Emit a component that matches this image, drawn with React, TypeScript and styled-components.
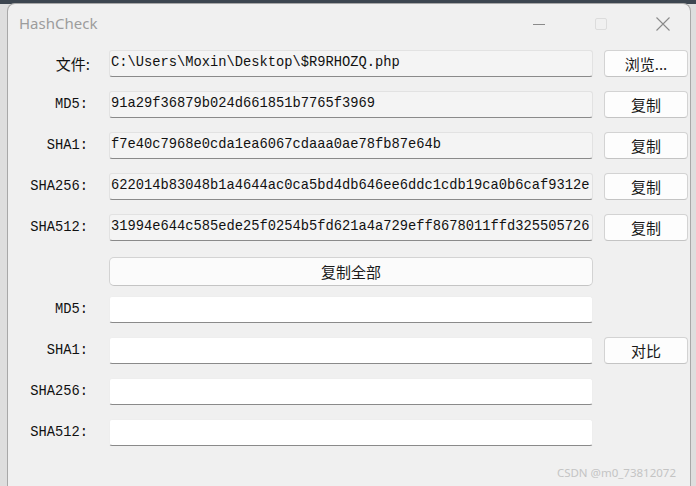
import React from "react";
import styled, { createGlobalStyle } from "styled-components";

const Global = createGlobalStyle`
  html, body { margin: 0; padding: 0; }
  body {
    width: 696px;
    height: 486px;
    overflow: hidden;
    background: linear-gradient(#3d4650 0 4px, #dedede 4px);
  }
  #root { height: 100%; }
`;

const Desktop = styled.div`
  height: 100%;
  padding: 3px 5px 0 7px;
  box-sizing: border-box;
  display: flex;
`;

const Window = styled.div`
  flex: 1;
  background: #f0f0f0;
  border: 1px solid #a8a8a8;
  border-bottom: none;
  border-radius: 8px 8px 0 0;
  display: flex;
  flex-direction: column;
  position: relative;
  overflow: hidden;
`;

const TitleBar = styled.div`
  height: 39px;
  display: flex;
  align-items: center;
  padding-left: 11px;
  box-sizing: border-box;
`;

const Title = styled.div`
  flex: 1;
  font-family: "Noto Sans", "Open Sans", sans-serif;
  font-size: 15px;
  color: #9c9c9c;
  padding-bottom: 2px;
`;

const Controls = styled.div`
  display: flex;
  align-items: center;
  height: 100%;
  margin-right: -4px;
`;

const Ctl = styled.div`
  width: 62px;
  height: 100%;
  display: flex;
  align-items: center;
  justify-content: center;
`;

const Content = styled.div`
  display: flex;
  flex-direction: column;
  padding-top: 7px;
`;

const Row = styled.div<{ $mt?: number }>`
  display: grid;
  grid-template-columns: 90px 484px 84px;
  column-gap: 11px;
  align-items: center;
  height: 27px;
  margin-top: ${(p) => p.$mt ?? 0}px;
`;

const Label = styled.div<{ $cjk?: boolean }>`
  text-align: right;
  padding-right: ${(p) => (p.$cjk ? 8 : 10)}px;
  font-family: ${(p) =>
    p.$cjk
      ? `"Noto Sans CJK SC", sans-serif`
      : `"Liberation Mono", "Noto Sans CJK SC", monospace`};
  font-size: ${(p) => (p.$cjk ? "15px" : "13.75px")};
  color: #111;
  white-space: nowrap;
`;

const Field = styled.div<{ $white?: boolean }>`
  height: 27px;
  box-sizing: border-box;
  background: ${(p) => (p.$white ? "#ffffff" : "#f4f4f4")};
  border: 1px solid ${(p) => (p.$white ? "#eeeeee" : "#e2e2e2")};
  border-bottom: 1px solid #8a8a8a;
  border-radius: 3px;
  padding: 0 1px;
  font-family: "Liberation Mono", "Noto Sans CJK SC", monospace;
  font-size: 13.75px;
  line-height: 23px;
  color: #111;
  white-space: nowrap;
  overflow: hidden;
`;

const Button = styled.button<{ $h?: number }>`
  height: ${(p) => p.$h ?? 27}px;
  box-sizing: border-box;
  background: #fdfdfd;
  border: 1px solid #d3d3d3;
  border-bottom-color: #c4c4c4;
  border-radius: 4px;
  font-family: "Noto Sans CJK SC", sans-serif;
  font-size: 15px;
  color: #1a1a1a;
  padding: 0;
  line-height: 1;
  display: flex;
  align-items: center;
  justify-content: center;
`;

const WideButton = styled(Button)`
  grid-column: 2;
  height: 29px;
  background: #fbfbfb;
  border-radius: 5px;
`;

const Watermark = styled.div`
  position: absolute;
  right: 14px;
  bottom: 6px;
  font-family: "Noto Sans", sans-serif;
  font-size: 11.5px;
  color: #c4c4c4;
`;

const top = [
  { label: "MD5:", value: "91a29f36879b024d661851b7765f3969" },
  { label: "SHA1:", value: "f7e40c7968e0cda1ea6067cdaaa0ae78fb87e64b" },
  { label: "SHA256:", value: "622014b83048b1a4644ac0ca5bd4db646ee6ddc1cdb19ca0b6caf9312e" },
  { label: "SHA512:", value: "31994e644c585ede25f0254b5fd621a4a729eff8678011ffd325505726" },
];

const bottom = ["MD5:", "SHA1:", "SHA256:", "SHA512:"];

export default function App() {
  return (
    <>
      <Global />
      <Desktop>
        <Window>
          <TitleBar>
            <Title>HashCheck</Title>
            <Controls>
              <Ctl>
                <svg width="16" height="16" viewBox="0 0 16 16">
                  <path d="M2 8.5h12" stroke="#8a8a8a" strokeWidth="1" />
                </svg>
              </Ctl>
              <Ctl>
                <svg width="14" height="14" viewBox="0 0 14 14">
                  <rect x="1.5" y="1.5" width="11" height="11" rx="1.5" fill="none" stroke="#dcdcdc" strokeWidth="1" />
                </svg>
              </Ctl>
              <Ctl>
                <svg width="16" height="16" viewBox="0 0 16 16">
                  <path d="M1.5 1.5l13 13M14.5 1.5l-13 13" stroke="#8a8a8a" strokeWidth="1.1" />
                </svg>
              </Ctl>
            </Controls>
          </TitleBar>
          <Content>
            <Row>
              <Label $cjk>文件:</Label>
              <Field>C:\Users\Moxin\Desktop\$R9RHOZQ.php</Field>
              <Button>浏览...</Button>
            </Row>
            {top.map((r) => (
              <Row key={r.label} $mt={14}>
                <Label>{r.label}</Label>
                <Field>{r.value}</Field>
                <Button>复制</Button>
              </Row>
            ))}
            <Row $mt={16}>
              <span />
              <WideButton>复制全部</WideButton>
            </Row>
            {bottom.map((l, i) => (
              <Row key={l} $mt={i === 0 ? 12 : 14}>
                <Label>{l}</Label>
                <Field $white />
                {i === 1 ? <Button>对比</Button> : <span />}
              </Row>
            ))}
          </Content>
          <Watermark>CSDN @m0_73812072</Watermark>
        </Window>
      </Desktop>
    </>
  );
}
